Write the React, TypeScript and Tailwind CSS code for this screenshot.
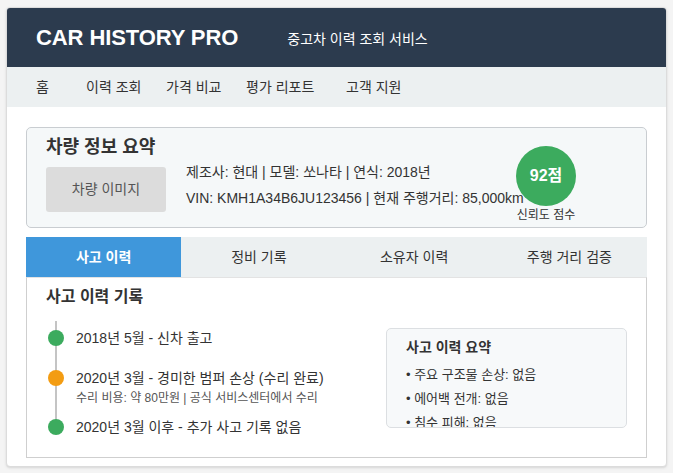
import React from "react";

const font = "font-['Liberation_Sans','Noto_Sans_CJK_KR',sans-serif]";

const navItems = [
  { label: "홈", w: "w-[50px]" },
  { label: "이력 조회", w: "w-[80px]" },
  { label: "가격 비교", w: "w-[80px]" },
  { label: "평가 리포트", w: "w-[100px]" },
  { label: "고객 지원", w: "" },
];

const tabs = ["사고 이력", "정비 기록", "소유자 이력", "주행 거리 검증"];

const timeline = [
  { color: "bg-[#3cab5e]", text: "2018년 5월 - 신차 출고", gap: "pb-[22px]" },
  {
    color: "bg-[#f39c12]",
    text: "2020년 3월 - 경미한 범퍼 손상 (수리 완료)",
    sub: "수리 비용: 약 80만원 | 공식 서비스센터에서 수리",
    gap: "pb-[12px]",
  },
  { color: "bg-[#3cab5e]", text: "2020년 3월 이후 - 추가 사고 기록 없음", gap: "" },
];

const App: React.FC = () => {
  return (
    <div className={`min-h-screen bg-[#f4f4f4] pt-[7px] px-[6px] text-[#333] ${font}`}>
      <div className="h-[460px] w-[661px] overflow-hidden rounded-[4px] border border-[#dcdcdc] bg-white shadow-sm">
        {/* Header */}
        <header className="flex h-[59px] items-center bg-[#2c3b4e] px-[29px] text-white">
          <h1 className="text-[22px] font-bold tracking-[-0.1px]">CAR HISTORY PRO</h1>
          <span className="ml-[49px] mt-[4px] text-[14px]">중고차 이력 조회 서비스</span>
        </header>

        {/* Nav */}
        <nav className="flex h-[40px] items-center bg-[#ecf0f1] px-[29px] text-[14px] text-[#333]">
          {navItems.map((n) => (
            <span key={n.label} className={n.w}>
              {n.label}
            </span>
          ))}
        </nav>

        <div className="px-[19px] pt-[20px]">
          {/* Vehicle summary */}
          <div className="flex h-[101px] rounded-[5px] border border-[#c9cdd1] bg-[#f5f8f9] pl-[19px] pt-[8px]">
            <div className="w-[469px]">
              <h2 className="text-[18px] font-bold leading-[22px]">차량 정보 요약</h2>
              <div className="mt-[9px] flex">
                <div className="flex h-[45px] w-[120px] shrink-0 items-center justify-center rounded-[3px] bg-[#dcdcdc] text-[14px] text-[#555]">
                  차량 이미지
                </div>
                <div className="-mt-[8px] ml-[20px] whitespace-nowrap text-[14px] leading-[26px]">
                  <p>제조사: 현대 | 모델: 쏘나타 | 연식: 2018년</p>
                  <p>VIN: KMH1A34B6JU123456 | 현재 주행거리: 85,000km</p>
                </div>
              </div>
            </div>
            <div className="mt-[10px] flex w-[62px] flex-col items-center">
              <div className="flex h-[60px] w-[60px] items-center justify-center rounded-full bg-[#3cab5e] text-[16px] font-bold text-white">
                92점
              </div>
              <span className="mt-[1px] text-[12px] leading-[16px]">신뢰도 점수</span>
            </div>
          </div>

          {/* Tabs */}
          <div className="mt-[9px] grid h-[40px] grid-cols-4 bg-[#ecf0f1] text-[14px]">
            {tabs.map((t, i) => (
              <div
                key={t}
                className={
                  i === 0
                    ? "flex items-center justify-center bg-[#3f97db] font-bold text-white"
                    : "flex items-center justify-center text-[#333]"
                }
              >
                {t}
              </div>
            ))}
          </div>

          {/* Tab panel */}
          <div className="h-[181px] overflow-hidden border border-t-[#e3e3e3] border-[#cfcfcf] px-[19px] pt-[9px]">
            <h3 className="text-[16px] font-bold leading-[20px]">사고 이력 기록</h3>
            <div className="mt-[21px] flex justify-between">
              <div className="relative pt-[1px]">
                <div className="absolute left-[9px] top-[-7px] h-[108px] w-[2px] bg-[#c4c4c4]" />
                {timeline.map((item, i) => (
                  <div key={i} className={`relative flex items-start ${item.gap}`}>
                    <div className={`ml-[2px] mt-[1px] h-[16px] w-[16px] shrink-0 rounded-full ${item.color}`} />
                    <div className="ml-[12px]">
                      <p className="text-[14px] leading-[18px]">{item.text}</p>
                      {item.sub && (
                        <p className="mt-[3px] text-[12px] leading-[16px] text-[#555]">{item.sub}</p>
                      )}
                    </div>
                  </div>
                ))}
              </div>
              <div className="-ml-[1px] h-[100px] w-[241px] shrink-0 overflow-hidden rounded-[5px] border border-[#dcdfe2] bg-[#f7f9fa] px-[19px] pt-[9px]">
                <h4 className="text-[14px] font-bold leading-[18px]">사고 이력 요약</h4>
                <ul className="mt-[7px] text-[13px] leading-[24px]">
                  <li>• 주요 구조물 손상: 없음</li>
                  <li>• 에어백 전개: 없음</li>
                  <li>• 침수 피해: 없음</li>
                </ul>
              </div>
            </div>
          </div>
        </div>
      </div>
    </div>
  );
};

export default App;
